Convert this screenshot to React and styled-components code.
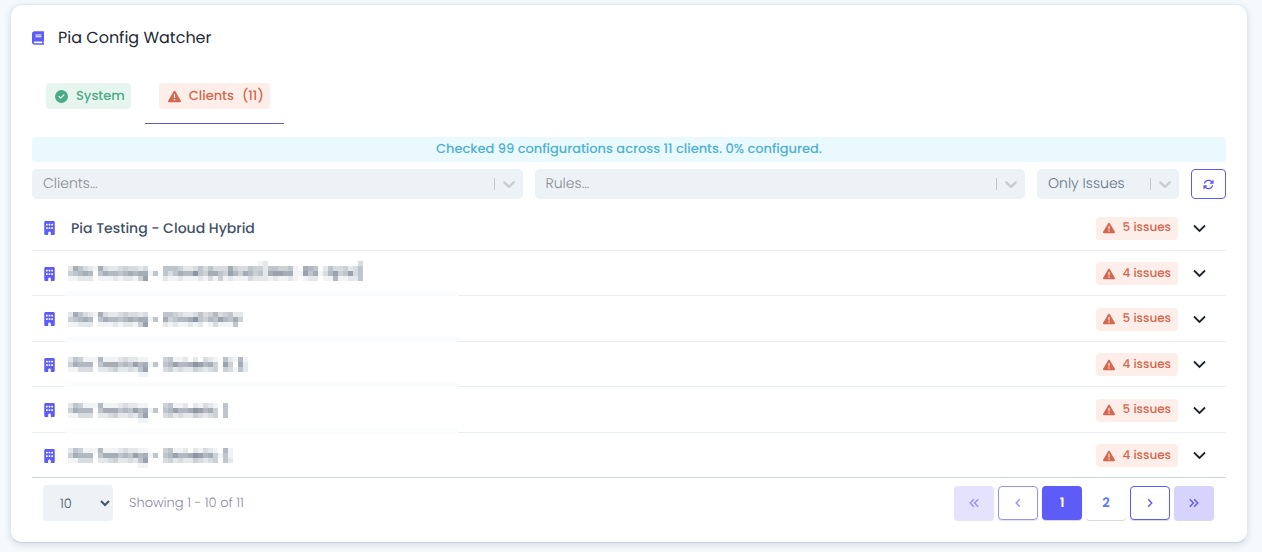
import { useState } from "react";
import styled, { createGlobalStyle, css } from "styled-components";
import {
  FaArrowsRotate,
  FaBuilding,
  FaCircleCheck,
  FaTriangleExclamation,
} from "react-icons/fa6";
import { FaBook } from "react-icons/fa";

const GlobalStyle = createGlobalStyle`
  * {
    box-sizing: border-box;
  }
  body {
    margin: 0;
    background: #f5f9fc;
    color: #4a5568;
    font-family: Poppins, Inter, "Liberation Sans", sans-serif;
    font-size: 13px;
    text-rendering: geometricPrecision;
  }
  button, select {
    font-family: inherit;
    text-rendering: inherit;
  }
`;

const Page = styled.main`
  padding: 4px 14px 8px 10px;
`;

const Card = styled.section`
  padding: 20px 21px 21px;
  background: #fff;
  border: 1px solid #e0e8f1;
  border-bottom-color: #c9d5e1;
  border-radius: 12px;
  box-shadow: 0 2px 6px rgba(71, 100, 130, 0.18);
`;

const Title = styled.h1`
  display: flex;
  align-items: center;
  gap: 14px;
  margin: 0;
  color: #232934;
  font-size: 16px;
  font-weight: 400;
  line-height: 26px;

  svg {
    width: 12px;
    height: 14px;
    color: #5e5cf6;
  }
`;

const Tabs = styled.div`
  display: flex;
  margin-top: 19px;
`;

const Tab = styled.button`
  padding: 13px 14px 14px;
  background: none;
  border: 0;
  border-bottom: 1px solid ${(props) => (props.$active ? "#5e5cd8" : "transparent")};
  cursor: pointer;
`;

const tones = {
  green: css`
    background: #e6f6ee;
    color: #4bab89;
  `,
  red: css`
    background: #fdeee9;
    color: #d3684f;
  `,
};

const Badge = styled.span`
  display: flex;
  align-items: center;
  gap: 8px;
  height: 26px;
  padding: 0 6px 0 9px;
  border-radius: 4px;
  font-size: 13px;
  font-weight: 500;
  white-space: pre;
  ${(props) => tones[props.$tone]}
`;

const IssueBadge = styled(Badge)`
  height: 23px;
  padding: 0 7px;
  font-size: 12px;
`;

const Banner = styled.p`
  margin: 13px 0 7px;
  padding-bottom: 1px;
  background: #e9f9fe;
  border-radius: 4px;
  color: #53b1d0;
  font-size: 13px;
  font-weight: 500;
  line-height: 24px;
  text-align: center;
`;

const Filters = styled.div`
  display: grid;
  grid-template-columns: 1fr 1fr 142px 35px;
  gap: 12px;
`;

const SelectWrap = styled.label`
  position: relative;
  display: flex;
`;

const FilterSelect = styled.select`
  width: 100%;
  height: 30px;
  padding: 0 40px 2px 11px;
  appearance: none;
  background: #edf2f7;
  border: 0;
  border-radius: 5px;
  color: ${(props) => (props.$empty ? "#8a8d92" : "#667587")};
  font-size: 14px;
  font-weight: 300;
`;

const Indicator = styled.span`
  position: absolute;
  top: 0;
  right: 4px;
  display: flex;
  align-items: center;
  gap: 4px;
  height: 100%;
  color: #c9ccd0;
  pointer-events: none;

  &::before {
    content: "";
    width: 1px;
    height: 12px;
    background: #c4c9ce;
  }
`;

const RefreshButton = styled.button`
  display: grid;
  place-items: center;
  padding: 0;
  background: #fff;
  border: 1px solid #5e5cf6;
  border-radius: 4px;
  color: #5e5cf6;
  cursor: pointer;
`;

const ClientList = styled.ul`
  display: grid;
  grid-auto-rows: 1fr;
  min-height: 273px;
  margin: 6px 0 0;
  padding: 0;
  list-style: none;
`;

const ClientRow = styled.li`
  position: relative;
  display: flex;
  align-items: center;
  padding: 2px 20px 0 12px;
  border-bottom: 1px solid #e9eff5;

  > svg {
    width: 11px;
    height: 14px;
    color: #5e5cf6;
  }

  &:last-child {
    border-bottom-color: #cbd5df;
  }

  /* the mask over a hidden name also runs over the divider below it */
  ${(props) =>
    props.$masked &&
    css`
      &:not(:last-child)::after {
        content: "";
        position: absolute;
        bottom: -1px;
        left: 33px;
        width: 393px;
        height: 5px;
        background: #fbfcfe;
      }
    `}
`;

const ClientName = styled.span`
  flex: 1;
  display: flex;
  margin-left: 16px;
  color: #435166;
  font-size: 14px;
  font-weight: 500;
`;

const MaskedName = styled.span`
  flex: 1;
  display: flex;
  margin-left: 13px;
`;

const ExpandButton = styled.button`
  display: flex;
  margin-left: 15px;
  padding: 0;
  background: none;
  border: 0;
  color: #1c2430;
  cursor: pointer;
`;

const Footer = styled.footer`
  display: flex;
  align-items: center;
  gap: 16px;
  padding: 7px 12px 0 11px;
`;

const PageSize = styled.select`
  width: 70px;
  height: 36px;
  padding: 0 0 0 13px;
  background: #edf2f7;
  border: 0;
  border-radius: 4px;
  color: #475569;
  font-size: 13px;
  font-weight: 300;
`;

const Showing = styled.span`
  flex: 1;
  color: #8d8ba7;
  font-size: 13px;
  font-weight: 300;
`;

const Pager = styled.nav`
  display: flex;
  gap: 4px;
`;

const pagerKinds = {
  soft: css`
    background: #d6d4fc;
    color: #5e5cf6;
  `,
  outline: css`
    background: #fff;
    border: 1px solid #5e5cf6;
    color: #5e5cf6;
  `,
  current: css`
    background: #5e5cf6;
    color: #fff;
  `,
  plain: css`
    background: #fff;
    color: #5878fa;
  `,
};

const PagerButton = styled.button`
  display: grid;
  place-items: center;
  width: 40px;
  height: 34px;
  padding: 0;
  border: 0;
  border-radius: 4px;
  box-shadow: 0 1px 1px rgba(0, 0, 0, 0.16);
  font-size: 13px;
  font-weight: 600;
  ${(props) => pagerKinds[props.$kind]}

  &:disabled {
    opacity: 0.65;
  }
`;

function SelectArrow() {
  return (
    <svg width="20" height="20" viewBox="0 0 20 20" fill="currentColor">
      <path d="M4.516 7.548c0.436-0.446 1.043-0.481 1.576 0l3.908 3.747 3.908-3.747c0.533-0.481 1.141-0.446 1.574 0 0.436 0.445 0.408 1.197 0 1.615-0.406 0.418-4.695 4.502-4.695 4.502-0.217 0.223-0.502 0.335-0.787 0.335s-0.57-0.112-0.789-0.335c0 0-4.287-4.084-4.695-4.502s-0.436-1.17 0-1.615z" />
    </svg>
  );
}

function Chevron() {
  return (
    <svg width="13" height="9" viewBox="0 0 13 9" fill="none" stroke="currentColor" strokeWidth="1.8">
      <path d="M1 1.5 6.5 7 12 1.5" />
    </svg>
  );
}

function Angle({ left, double }) {
  return (
    <svg
      width="10"
      height="10"
      viewBox="0 0 10 10"
      fill="none"
      stroke="currentColor"
      strokeWidth="1.4"
      transform={left ? "scale(-1 1)" : undefined}
    >
      {double ? <path d="M.8 1.2 4.4 5 .8 8.8M5.2 1.2 8.8 5 5.2 8.8" /> : <path d="M3.2 1.2 6.8 5 3.2 8.8" />}
    </svg>
  );
}

// Each digit is the darkness of one 5px block, 0 is empty.
function Mosaic({ rows }) {
  return (
    <svg width="300" height="25" role="img" aria-label="Hidden client name" shapeRendering="crispEdges">
      {rows.map((row, y) =>
        [...row].map((level, x) =>
          level > 0 ? (
            <rect
              key={x + "-" + y}
              x={x * 5}
              y={y * 5}
              width="5"
              height="5"
              fill="#7f8b99"
              fillOpacity={level / 10}
            />
          ) : null
        )
      )}
    </svg>
  );
}

// The hidden names share their first 19 columns.
const cloud = ["2753217322343323000", "4567605766567677150", "1122201112122148000"];
const generic = ["2541116111232211000", "4766605777565867150", "1133302234223258000"];
const descender = "0000000000000011";

const clients = [
  { name: "Pia Testing - Cloud Hybrid", issues: 5 },
  {
    issues: 4,
    mask: [
      "0".repeat(38) + "12" + "0".repeat(18) + "3",
      cloud[0] + "5554223535" + "33374335442" + "5544510765025334235",
      cloud[1] + "5357669547" + "75486476452" + "7887711857136845835",
      cloud[2] + "2112111213" + "14121113222" + "1211210122011611225",
    ],
  },
  {
    issues: 5,
    mask: ["", cloud[0] + "5543223534634522", cloud[1] + "7456679546586574", cloud[2] + "2121121201311150"],
  },
  {
    issues: 4,
    mask: [
      "",
      generic[0] + "45112020321052161",
      generic[1] + "56866798674084072",
      generic[2] + "34232243234043152",
      descender,
    ],
  },
  {
    issues: 5,
    mask: [
      "",
      generic[0] + "4511202132105",
      generic[1] + "5686679867405",
      generic[2] + "3423224323405",
      descender,
    ],
  },
  {
    issues: 4,
    mask: [
      "",
      generic[0] + "45112021321061",
      generic[1] + "56866798674151",
      generic[2] + "34232243234052",
      descender,
    ],
  },
];

function Filter({ label, options }) {
  const [value, setValue] = useState(options[0]);
  return (
    <SelectWrap>
      <FilterSelect
        aria-label={label}
        $empty={value.endsWith("...")}
        value={value}
        onChange={(e) => setValue(e.target.value)}
      >
        {options.map((option) => (
          <option key={option}>{option}</option>
        ))}
      </FilterSelect>
      <Indicator>
        <SelectArrow />
      </Indicator>
    </SelectWrap>
  );
}

function App() {
  const [tab, setTab] = useState("clients");

  return (
    <Page>
      <GlobalStyle />
      <Card>
        <Title>
          <FaBook />
          Pia Config Watcher
        </Title>

        <Tabs role="tablist">
          <Tab role="tab" aria-selected={tab === "system"} $active={tab === "system"} onClick={() => setTab("system")}>
            <Badge $tone="green">
              <FaCircleCheck size={13} />
              System
            </Badge>
          </Tab>
          <Tab role="tab" aria-selected={tab === "clients"} $active={tab === "clients"} onClick={() => setTab("clients")}>
            <Badge $tone="red">
              <FaTriangleExclamation size={13} />
              <span>Clients</span>
              <span>(11)</span>
            </Badge>
          </Tab>
        </Tabs>

        <Banner>Checked 99 configurations across 11 clients. 0% configured.</Banner>

        <Filters>
          <Filter label="Clients" options={["Clients..."]} />
          <Filter label="Rules" options={["Rules..."]} />
          <Filter label="Status" options={["Only Issues"]} />
          <RefreshButton aria-label="Refresh">
            <FaArrowsRotate size={11} />
          </RefreshButton>
        </Filters>

        <ClientList>
          {clients.map((client, i) => (
            <ClientRow key={i} $masked={!client.name}>
              <FaBuilding />
              {client.name ? (
                <ClientName>{client.name}</ClientName>
              ) : (
                <MaskedName>
                  <Mosaic rows={client.mask} />
                </MaskedName>
              )}
              <IssueBadge $tone="red">
                <FaTriangleExclamation size={12} />
                {client.issues} issues
              </IssueBadge>
              <ExpandButton aria-label="Expand">
                <Chevron />
              </ExpandButton>
            </ClientRow>
          ))}
        </ClientList>

        <Footer>
          <PageSize aria-label="Rows per page" defaultValue="10">
            <option>10</option>
            <option>25</option>
            <option>50</option>
          </PageSize>
          <Showing>Showing 1 - 10 of 11</Showing>
          <Pager aria-label="Pages">
            <PagerButton $kind="soft" aria-label="First page" disabled>
              <Angle left double />
            </PagerButton>
            <PagerButton $kind="outline" aria-label="Previous page" disabled>
              <Angle left />
            </PagerButton>
            <PagerButton $kind="current">1</PagerButton>
            <PagerButton $kind="plain">2</PagerButton>
            <PagerButton $kind="outline" aria-label="Next page">
              <Angle />
            </PagerButton>
            <PagerButton $kind="soft" aria-label="Last page">
              <Angle double />
            </PagerButton>
          </Pager>
        </Footer>
      </Card>
    </Page>
  );
}

export default App;
